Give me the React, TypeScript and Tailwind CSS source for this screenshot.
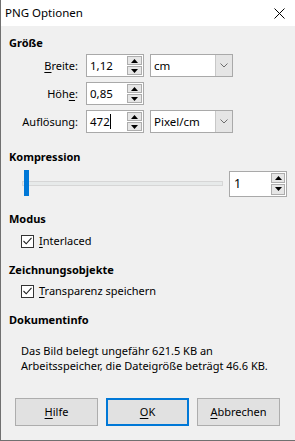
import React from "react";

function U({ children }: { children: React.ReactNode }) {
  return <span className="underline underline-offset-2">{children}</span>;
}

function Spin({ small }: { small?: boolean }) {
  return (
    <div className={`flex flex-col gap-px ${small ? "w-[15px]" : "w-[16px]"} self-stretch py-[1px] pr-[1px]`}>
      {["up", "down"].map((d) => (
        <div key={d} className="flex-1 border border-[#adadad] bg-[#e6e6e6] flex items-center justify-center">
          <svg width="7" height="4" viewBox="0 0 7 4">
            {d === "up" ? <path d="M0 4 L3.5 0 L7 4Z" fill="#000" /> : <path d="M0 0 L3.5 4 L7 0Z" fill="#000" />}
          </svg>
        </div>
      ))}
    </div>
  );
}

function NumField({ value, caret }: { value: string; caret?: boolean }) {
  return (
    <div className="w-[58px] h-[23px] bg-white border border-[#a9a9a9] flex items-stretch">
      <div className="flex-1 flex items-center pl-[3px] text-[11.5px]">
        {value}
        {caret && <div className="w-px h-[15px] bg-black" />}
      </div>
      <Spin />
    </div>
  );
}

function Combo({ value }: { value: string }) {
  return (
    <div className="w-[83px] h-[23px] bg-white border border-[#a9a9a9] flex items-stretch ml-[6px]">
      <div className="flex-1 flex items-center pl-[3px] text-[11.5px]">{value}</div>
      <div className="w-[17px] bg-[#e5e5e5] border-l border-[#c8c8c8] flex items-center justify-center">
        <svg width="8" height="5" viewBox="0 0 8 5">
          <path d="M0.5 0.5 L4 4 L7.5 0.5" fill="none" stroke="#6d6d6d" strokeWidth="1" />
        </svg>
      </div>
    </div>
  );
}

function Check({ children }: { children: React.ReactNode }) {
  return (
    <div className="flex items-center h-[16px] ml-[12px] gap-[5px]">
      <div className="w-[13px] h-[13px] bg-white border border-[#333] flex items-center justify-center">
        <svg width="9" height="8" viewBox="0 0 9 8">
          <path d="M0.5 4 L3.2 6.8 L8.5 0.8" fill="none" stroke="#222" strokeWidth="1.1" />
        </svg>
      </div>
      <span>{children}</span>
    </div>
  );
}

function Heading({ children, className }: { children: React.ReactNode; className?: string }) {
  return <div className={`font-bold leading-[16px] ${className ?? ""}`}>{children}</div>;
}

function Btn({ children, primary }: { children: React.ReactNode; primary?: boolean }) {
  return (
    <div
      className={`w-[83px] h-[28px] bg-[#e1e1e1] flex items-center justify-center ${
        primary ? "border-2 border-[#0078d7]" : "border border-[#adadad]"
      }`}
    >
      {children}
    </div>
  );
}

export default function App() {
  return (
    <div className="w-[295px] h-[441px] bg-[#f0f0f0] border-l border-b border-[#707070] flex flex-col text-[11px] text-black font-['Segoe_UI','Noto_Sans',sans-serif] leading-[16px] overflow-hidden">
      <div className="h-[26px] bg-white flex items-center justify-between pl-[4px] pr-[10px] shrink-0 text-[11.5px]">
        <span>PNG Optionen</span>
        <svg width="11" height="11" viewBox="0 0 11 11">
          <path d="M0.5 0.5 L10.5 10.5 M10.5 0.5 L0.5 10.5" stroke="#000" strokeWidth="1" />
        </svg>
      </div>

      <div className="flex flex-col pl-[8px]">
        <Heading className="mt-[9px]">Größe</Heading>
        <div className="mt-[3px] flex flex-col gap-[5px]">
          <div className="flex items-center">
            <div className="w-[70px] text-right pr-[1px]">
              <U>B</U>reite:
            </div>
            <div className="ml-[7px] flex">
              <NumField value="1,12" />
              <Combo value="cm" />
            </div>
          </div>
          <div className="flex items-center">
            <div className="w-[70px] text-right pr-[1px]">
              Höh<U>e</U>:
            </div>
            <div className="ml-[7px] flex">
              <NumField value="0,85" />
            </div>
          </div>
          <div className="flex items-center">
            <div className="w-[70px] text-right pr-[1px]">
              Auf<U>l</U>ösung:
            </div>
            <div className="ml-[7px] flex">
              <NumField value="472" caret />
              <Combo value="Pixel/cm" />
            </div>
          </div>
        </div>

        <Heading className="mt-[16px]">Kompression</Heading>
        <div className="mt-[5px] flex items-center h-[27px] pr-[8px]">
          <div className="relative ml-[13px] w-[201px] h-[5px] bg-[#e7eaea] border border-[#d6d6d6]">
            <div className="absolute left-[1px] top-[-12px] w-[5px] h-[26px] bg-[#0078d7]" />
          </div>
          <div className="ml-[6px] w-[58px] h-[26px] bg-white border border-[#a9a9a9] flex items-stretch">
            <div className="flex-1 flex items-center pl-[4px] text-[12.5px]">1</div>
            <Spin small />
          </div>
        </div>

        <Heading className="mt-[14px]">Modus</Heading>
        <div className="mt-[6px]">
          <Check>
            <U>I</U>nterlaced
          </Check>
        </div>

        <Heading className="mt-[13px]">Zeichnungsobjekte</Heading>
        <div className="mt-[5px]">
          <Check>
            <U>T</U>ransparenz speichern
          </Check>
        </div>

        <Heading className="mt-[13px]">Dokumentinfo</Heading>
        <div className="mt-[15px] ml-[12px] leading-[15px] flex flex-col">
          <span>Das Bild belegt ungefähr 621.5 KB an</span>
          <span>Arbeitsspeicher, die Dateigröße beträgt 46.6 KB.</span>
        </div>

        <div className="mt-[25px] ml-[6px] flex gap-[8px]">
          <Btn>
            <U>H</U>ilfe
          </Btn>
          <Btn primary>
            <U>O</U>K
          </Btn>
          <Btn>
            <U>A</U>bbrechen
          </Btn>
        </div>
      </div>
    </div>
  );
}
